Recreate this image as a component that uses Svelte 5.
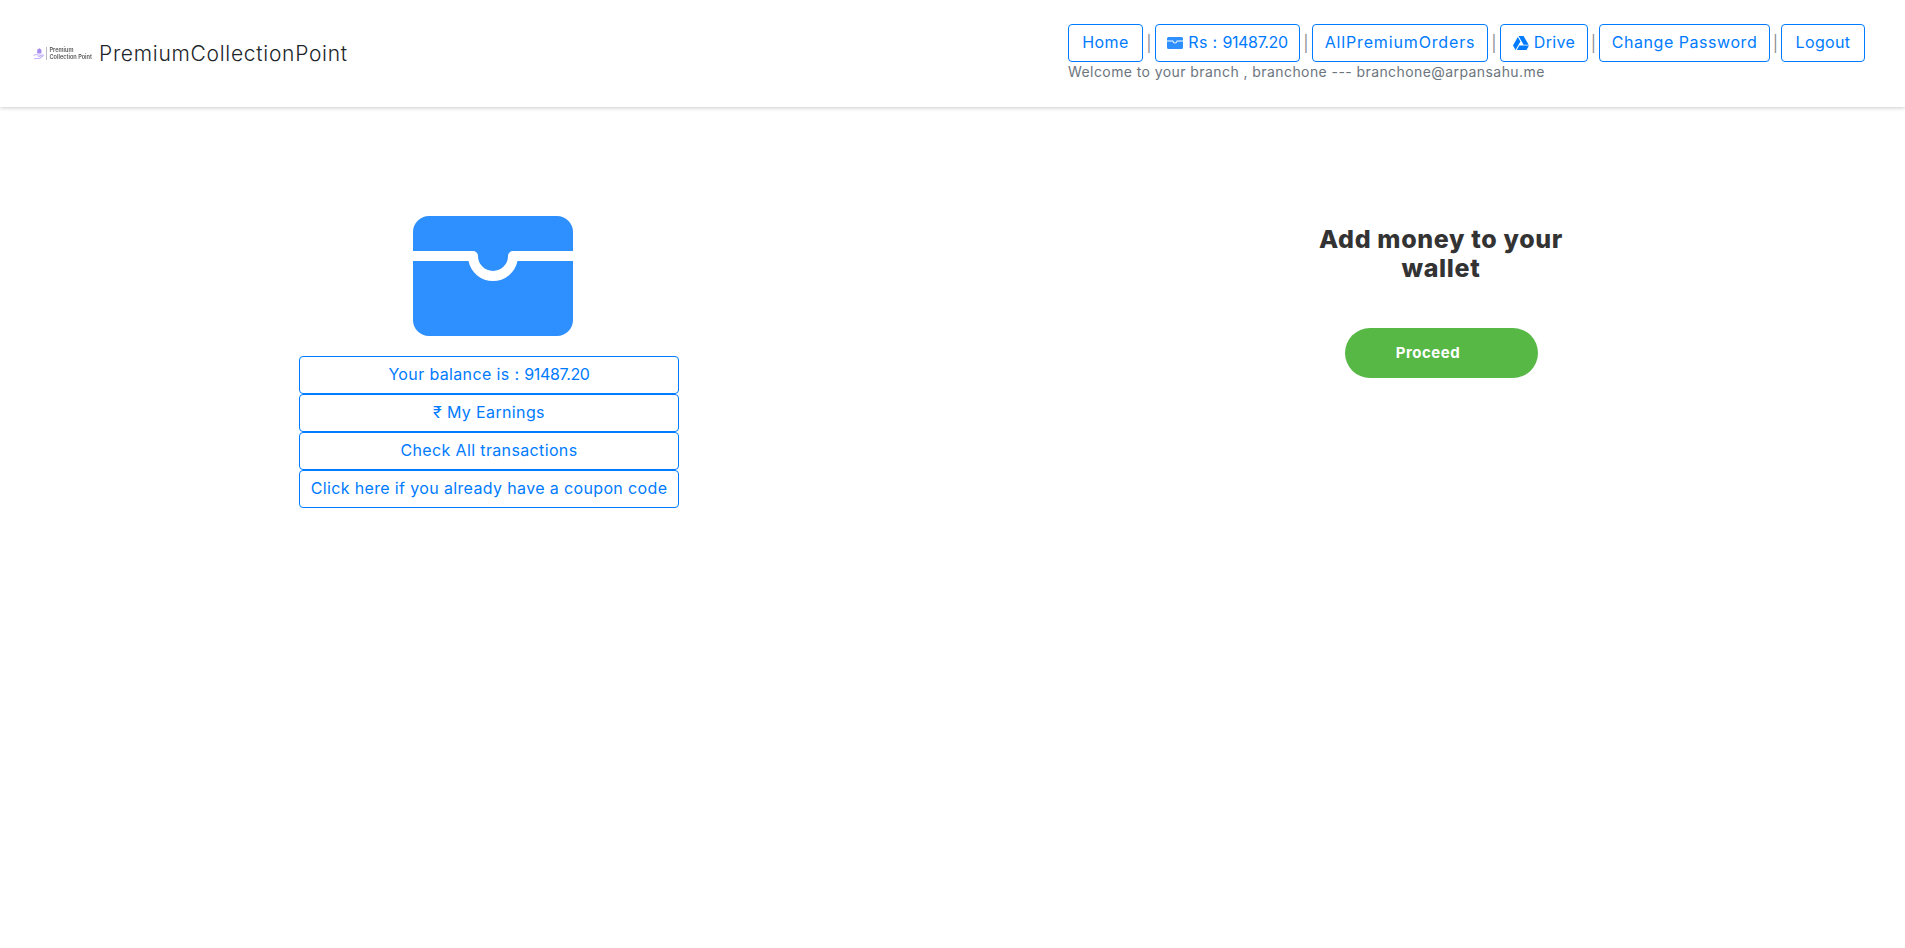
<script>
  const balance = '91487.20';
</script>

{#snippet wallet(cls)}
  <svg class={cls} viewBox="0 0 160 120" aria-hidden="true">
    <path d="M0 35V16A16 16 0 0 1 16 0H144A16 16 0 0 1 160 16V35H100A5 5 0 0 0 95 40A15 15 0 0 1 65 40A5 5 0 0 0 60 35Z" />
    <path d="M0 45H55.5A25 25 0 0 0 104.5 45H160V104A16 16 0 0 1 144 120H16A16 16 0 0 1 0 104Z" />
  </svg>
{/snippet}

<nav class="navbar">
  <a class="brand" href="#top">
    <span class="logo">
      <svg viewBox="0 0 14 15" aria-hidden="true">
        <path class="hand" d="M0.8 10.5C2.5 8.5 4.5 8.5 6 9.5L9 9.5C10 9.5 10 11 9 11.2L6.5 11.5M9.5 10.8L12.3 9.3C13.6 8.8 14 10 13 10.8L8.5 14H3.5L1.5 14.5" />
        <path class="box" d="M5.5 2.5L8.5 0.5L11 2.5V7.5H5.5Z" />
      </svg>
      <span class="logo-rule"></span>
      <span class="logo-text">Premium<br />Collection Point</span>
    </span>
    <span class="brand-name">PremiumCollectionPoint</span>
  </a>
  <div class="nav-right">
    <div class="links">
      <a class="btn home" href="#top">Home</a>
      <span class="sep">|</span>
      <a class="btn rs" href="#top">{@render wallet('wallet-small')}<span>Rs : <span class="num">{balance}</span></span></a>
      <span class="sep">|</span>
      <a class="btn orders" href="#top">AllPremiumOrders</a>
      <span class="sep">|</span>
      <a class="btn drive-btn" href="#top">
        <svg class="drive" viewBox="0 0 512 512" aria-hidden="true">
          <path d="M339 314.9L175.4 32h161.2l163.6 282.9H339zm-137.5 23.6L120.9 480h310.5L512 338.5H201.5zM154.1 67.4L0 338.5 80.6 480 237 208.8 154.1 67.4z" />
        </svg>
        Drive
      </a>
      <span class="sep tight">|</span>
      <a class="btn password" href="#top">Change Password</a>
      <span class="sep tight">|</span>
      <a class="btn logout" href="#top">Logout</a>
    </div>
    <div class="welcome">Welcome to your branch , branchone --- branchone@arpansahu.me</div>
  </div>
</nav>

<main class="content">
  <section class="left">
    {@render wallet('wallet-big')}
    <div class="actions">
      <a class="btn" href="#top"><span>Your balance is : <span class="num">{balance}</span></span></a>
      <a class="btn" href="#top">₹ My Earnings</a>
      <a class="btn" href="#top">Check All transactions</a>
      <a class="btn" href="#top">Click here if you already have a coupon code</a>
    </div>
  </section>
  <section class="right">
    <h2>Add money to your wallet</h2>
    <button class="proceed">Proceed</button>
  </section>
</main>

<style>
  :global(body) {
    margin: 0;
    background: #fff;
    font-family: Inter, "Liberation Sans", sans-serif;
  }
  .navbar {
    height: 107px;
    box-sizing: border-box;
    display: flex;
    justify-content: space-between;
    align-items: center;
    padding: 0 40px 0 33px;
    box-shadow: 0 1px 4px rgba(0, 0, 0, 0.2);
  }
  .brand {
    display: flex;
    align-items: center;
    gap: 7px;
    color: #212529;
    text-decoration: none;
  }
  .brand-name {
    font-size: 21px;
    font-weight: 300;
    letter-spacing: 0.72px;
    line-height: 26px;
    padding-top: 1px;
  }
  .logo {
    display: flex;
    align-items: center;
    width: 59px;
    filter: blur(0.35px);
  }
  .logo svg {
    width: 14px;
    height: 15px;
  }
  .hand {
    fill: none;
    stroke: #c4b2fa;
    stroke-width: 1.4;
  }
  .box {
    fill: #a58af0;
  }
  .logo-rule {
    width: 1px;
    height: 13px;
    margin: 0 3px 0 2px;
    background: #b9b9c4;
  }
  .logo-text {
    font-size: 5.6px;
    font-weight: 600;
    line-height: 7px;
    color: #555;
    white-space: nowrap;
  }
  .nav-right {
    display: flex;
    flex-direction: column;
    margin-top: -2px;
  }
  .links {
    display: flex;
    align-items: center;
  }
  .sep {
    width: 12px;
    text-align: center;
    font-size: 16px;
    color: #8a8f94;
  }
  .sep.tight {
    width: 11px;
  }
  .btn {
    box-sizing: border-box;
    height: 38px;
    padding: 0 0 2px;
    display: inline-flex;
    align-items: center;
    justify-content: center;
    gap: 5px;
    font-size: 16px;
    font-weight: 400;
    letter-spacing: 0.36px;
    color: #007bff;
    text-decoration: none;
    border: 1px solid #007bff;
    border-radius: 4px;
    white-space: nowrap;
  }
  .home { width: 75px; }
  .rs { width: 145px; }
  .orders { width: 176px; }
  .drive-btn { width: 88px; }
  .password { width: 171px; }
  .logout { width: 84px; }
  .orders {
    letter-spacing: 0.85px;
  }
  .password {
    letter-spacing: 0.55px;
  }
  .num {
    letter-spacing: -0.35px;
  }
  .wallet-small {
    width: 16px;
    height: 12px;
    fill: #2e8fff;
    margin-top: 2px;
  }
  .drive {
    width: 16px;
    height: 16px;
    fill: #007bff;
    margin-top: 2px;
  }
  .welcome {
    font-size: 14px;
    font-weight: 400;
    letter-spacing: 0.42px;
    line-height: 20px;
    color: #6c757d;
  }
  .content {
    display: flex;
    padding-top: 109px;
  }
  .left {
    width: 977px;
    box-sizing: border-box;
    padding-left: 299px;
  }
  .wallet-big {
    display: block;
    width: 160px;
    height: 120px;
    margin: 0 0 20px 114px;
    fill: #2e8fff;
  }
  .actions {
    width: 380px;
    display: flex;
    flex-direction: column;
  }
  .right {
    flex: 1;
    display: flex;
    flex-direction: column;
    align-items: center;
    padding-top: 9px;
  }
  h2 {
    width: 280px;
    margin: 0 0 45px;
    text-align: center;
    font-size: 25px;
    font-weight: 800;
    letter-spacing: 0.65px;
    line-height: 29px;
    color: #333;
  }
  .proceed {
    width: 193px;
    height: 50px;
    padding: 0 26px 2px 0;
    border: 0;
    border-radius: 25px;
    background: #57b846;
    color: #fff;
    font-family: inherit;
    font-size: 15px;
    font-weight: 700;
    letter-spacing: 0.5px;
  }
</style>
